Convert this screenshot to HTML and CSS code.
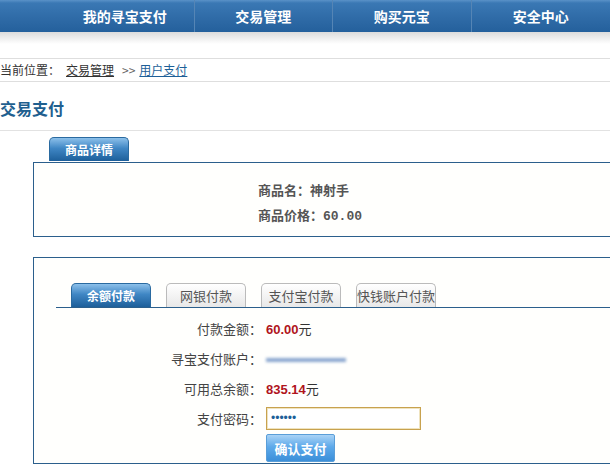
FILE: index.html
```html
<!DOCTYPE html>
<html>
<head>
<meta charset="utf-8">
<link rel="stylesheet" href="styles.css">
</head>
<body>
<div class="nav">
  <ul>
    <li>我的寻宝支付</li>
    <li>交易管理</li>
    <li>购买元宝</li>
    <li>安全中心</li>
  </ul>
</div>
<div class="navShadow"></div>

<div class="crumb">
  当前位置：<a href="#" class="crumbLink">交易管理</a><span class="arrow">&gt;&gt;</span><a href="#" class="crumbNow">用户支付</a>
</div>

<h2 class="title">交易支付</h2>

<!-- goods info -->
<div class="panel">
  <div class="tabRow first"><span class="tab on">商品详情</span></div>
  <div class="box goods">
    <p>商品名：神射手</p>
    <p>商品价格：<span class="num">60.00</span></p>
  </div>
</div>

<!-- payment -->
<div class="box pay">
  <div class="payTabs">
    <span class="tab on">余额付款</span>
    <span class="tab">网银付款</span>
    <span class="tab">支付宝付款</span>
    <span class="tab">快钱账户付款</span>
  </div>
  <div class="form">
    <label>付款金额：</label>
    <div><b class="money">60.00</b>元</div>
    <label>寻宝支付账户：</label>
    <div><span class="blurred"></span></div>
    <label>可用总余额：</label>
    <div><b class="money">835.14</b>元</div>
    <label>支付密码：</label>
    <div><input type="password" class="pwd" value="123456"></div>
    <span></span>
    <div><button class="payBtn">确认支付</button></div>
  </div>
</div>
</body>
</html>
```

FILE: styles.css
```css
body {
  margin: 0;
  font-family: "Noto Sans CJK SC", "Liberation Sans", sans-serif;
  font-size: 12px;
  color: #333;
  background: #fff;
  overflow: hidden;
}
/* top navigation */
.nav {
  height: 32px;
  background: linear-gradient(#5a92c8 0, #3a78b4 3px, #2e6aa6 60%, #24609c 100%);
}
.nav ul {
  margin: 0;
  padding: 0 0 0 56px;
  list-style: none;
  display: flex;
}
.nav li {
  width: 140px;
  height: 32px;
  line-height: 32px;
  text-align: center;
  color: #fff;
  font-size: 14px;
  font-weight: bold;
  border-right: 1px solid #5585b5;
  box-sizing: border-box;
}
.nav li:last-child {
  border-right: none;
}
.navShadow {
  height: 12px;
  background: linear-gradient(#dcdcdc, #fff);
}
/* breadcrumb */
.crumb {
  margin-top: 14px;
  height: 22px;
  line-height: 21px;
  border-top: 1px solid #dedede;
  border-bottom: 1px solid #dedede;
  color: #333;
}
.crumbLink {
  color: #333;
  margin-left: 6px;
}
.arrow {
  color: #666;
  margin: 0 4px 0 8px;
}
.crumbNow {
  color: #1d5f98;
}
.title {
  margin: 0;
  padding: 10px 0 0;
  height: 38px;
  line-height: 32px;
  font-size: 16px;
  color: #1f5f8f;
  border-bottom: 1px solid #e2e2e2;
}
/* tabs */
.tab {
  display: inline-block;
  width: 80px;
  height: 24px;
  line-height: 24px;
  text-align: center;
  box-sizing: border-box;
  border-radius: 5px 5px 0 0;
  font-size: 13px;
  color: #555;
  border: 1px solid #bbb;
  border-bottom: none;
  background: linear-gradient(#fff, #e8e8e8);
  vertical-align: bottom;
}
.tab.on {
  color: #fff;
  font-weight: bold;
  font-size: 12px;
  border: 1px solid #2a6aa0;
  border-bottom: none;
  background: linear-gradient(#8cc0ea 0, #3f86c4 45%, #1d5f9a 100%);
}
.tabRow.first {
  padding: 6px 0 0 49px;
  height: 25px;
}
.box {
  margin-left: 33px;
  width: 620px;
  border: 1px solid #2b5f8c;
  box-sizing: border-box;
  background: #fffffd;
}
.goods {
  height: 75px;
  padding: 14px 0 0 224px;
}
.goods p {
  margin: 0;
  height: 25px;
  line-height: 25px;
  font-size: 13px;
  font-weight: bold;
  color: #555;
}
.num {
  font-family: "Liberation Mono", monospace;
}
/* payment box */
.pay {
  margin-top: 20px;
  height: 207px;
  padding-top: 25px;
}
.payTabs {
  margin-left: 22px;
  padding-left: 15px;
  height: 24px;
  border-bottom: 1px solid #2b5f8c;
  display: flex;
  gap: 15px;
  align-items: flex-end;
}
.form {
  margin-top: 5px;
  display: grid;
  grid-template-columns: 228px 1fr;
  column-gap: 4px;
  grid-auto-rows: 30px;
  align-items: center;
  font-size: 13px;
}
.form label {
  text-align: right;
  color: #444;
}
.money {
  color: #b0141c;
  font-family: "Liberation Sans", sans-serif;
}
.blurred {
  display: inline-block;
  width: 80px;
  height: 4px;
  background: #8aa6cf;
  filter: blur(1.5px);
  vertical-align: middle;
}
.pwd {
  width: 155px;
  height: 23px;
  box-sizing: border-box;
  border: 1px solid #c8a24e;
  box-shadow: inset 0 0 0 1px #efe3bf;
  padding: 0 4px;
  color: #1d5f98;
  font-size: 12px;
}
.payBtn {
  display: block;
  width: 69px;
  height: 28px;
  border: 1px solid #5a9ed8;
  border-radius: 2px;
  background: linear-gradient(#a9d3f6 0, #5eaaea 45%, #3b8fd9 100%);
  color: #fff;
  font-weight: bold;
  font-size: 13px;
  font-family: "Noto Sans CJK SC", sans-serif;
  padding: 0;
}
```
